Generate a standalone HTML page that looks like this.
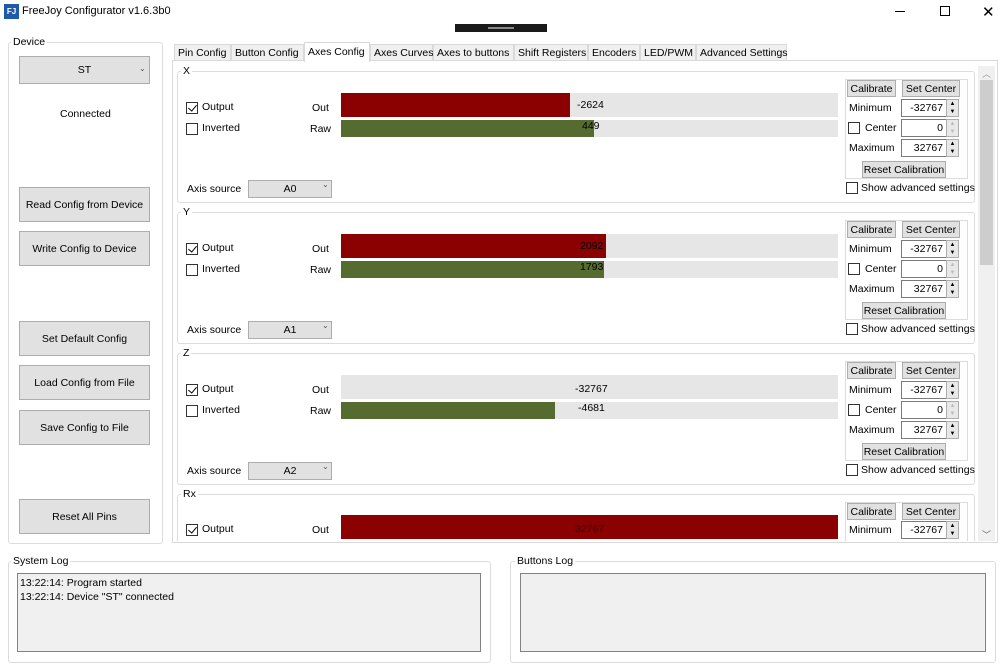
<!DOCTYPE html>
<html><head><meta charset="utf-8"><style>
*{box-sizing:border-box;margin:0;padding:0}
body{width:1000px;height:668px;background:#fff;font-family:"Liberation Sans",sans-serif;font-size:10.5px;color:#000;position:relative;overflow:hidden}
.a{position:absolute}
.btn{position:absolute;background:#e1e1e1;border:1px solid #adadad;text-align:center;display:flex;align-items:center;justify-content:center;white-space:nowrap}
.fs{position:absolute;border:1px solid #dcdcdc;border-radius:3px}
.lg{position:absolute;background:#fff;padding:0 2px;white-space:nowrap}
.cb{position:absolute;width:12px;height:12px;border:1px solid #333;background:#fff}
.cb.on::after{content:"";position:absolute;left:3px;top:0px;width:4px;height:7px;border:solid #000;border-width:0 1.5px 1.5px 0;transform:rotate(40deg)}
.tab{position:absolute;top:44px;height:17px;border:1px solid #d9d9d9;background:#f0f0f0;padding:2px 3px;white-space:nowrap}
.g{position:absolute;left:177px;width:798px;height:140px}
.g *{position:absolute;white-space:nowrap}
.inp{background:#fff;border:1px solid #7a7a7a;text-align:right;padding-right:3px;height:18px;line-height:16px}
.spin{width:13px;height:18px;border:1px solid #adadad;background:#e8e8e8;font-size:6px;line-height:8px;text-align:center}
</style></head><body>
<div class="a" style="left:4px;top:4px;width:15px;height:15px;background:#1e5aa8;color:#fff;font-size:8px;font-weight:bold;text-align:center;line-height:15px">FJ</div>
<div class="a" style="left:22px;top:5px;font-size:11px">FreeJoy Configurator v1.6.3b0</div>
<div class="a" style="left:895px;top:11px;width:10px;height:1px;background:#000"></div>
<div class="a" style="left:940px;top:6px;width:10px;height:10px;border:1px solid #000"></div>
<div class="a" style="left:982px;top:3px;font-size:15px">✕</div>
<div class="a" style="left:455px;top:24px;width:92px;height:8px;background:#1a1a1a"></div>
<div class="a" style="left:488px;top:27px;width:26px;height:2px;border-top:1px solid #888;border-bottom:1px solid #888"></div>

<div class="fs" style="left:8px;top:42px;width:155px;height:502px"></div>
<div class="lg" style="left:11px;top:36px">Device</div>
<div class="btn" style="left:19px;top:56px;width:131px;height:28px">ST</div>
<div class="a" style="left:139px;top:64px;font-size:8px;color:#555">⌄</div>
<div class="a" style="left:60px;top:108px">Connected</div>
<div class="btn" style="left:19px;top:187px;width:131px;height:35px">Read Config from Device</div>
<div class="btn" style="left:19px;top:231px;width:131px;height:35px">Write Config to Device</div>
<div class="btn" style="left:19px;top:321px;width:131px;height:35px">Set Default Config</div>
<div class="btn" style="left:19px;top:365px;width:131px;height:35px">Load Config from File</div>
<div class="btn" style="left:19px;top:410px;width:131px;height:35px">Save Config to File</div>
<div class="btn" style="left:19px;top:499px;width:131px;height:35px">Reset All Pins</div>

<div class="a" style="left:172px;top:60px;width:826px;height:483px;background:#fff;border:1px solid #d9d9d9"></div>
<div class="tab" style="left:174px;width:57px">Pin Config</div>
<div class="tab" style="left:231px;width:73px">Button Config</div>
<div class="tab" style="left:304px;top:42px;height:20px;width:66px;background:#fff;border-bottom:none;padding-top:3px">Axes Config</div>
<div class="tab" style="left:370px;width:63px">Axes Curves</div>
<div class="tab" style="left:433px;width:81px">Axes to buttons</div>
<div class="tab" style="left:514px;width:74px">Shift Registers</div>
<div class="tab" style="left:588px;width:52px">Encoders</div>
<div class="tab" style="left:640px;width:56px">LED/PWM</div>
<div class="tab" style="left:696px;width:91px">Advanced Settings</div>
<div class="a" style="left:978px;top:66px;width:17px;height:475px;background:#f0f0f0"></div>
<div class="a" style="left:980px;top:80px;width:13px;height:185px;background:#cdcdcd"></div>
<div class="a" style="left:982px;top:67px;font-size:9px;color:#999">︿</div>
<div class="a" style="left:982px;top:528px;font-size:9px;color:#666">﹀</div>

<div style="position:absolute;left:173px;top:62px;width:805px;height:479px;overflow:hidden">
<div style="position:absolute;left:-173px;top:-62px;width:1000px;height:700px">

<div class="g" style="top:66px">
<div class="fs" style="left:0;top:5px;width:798px;height:132px"></div>
<div style="left:4px;top:-1px;background:#fff;padding:0 2px">X</div>
<div class="cb on" style="left:9px;top:36px"></div><div style="left:25px;top:35px">Output</div>
<div class="cb" style="left:9px;top:57px"></div><div style="left:25px;top:56px">Inverted</div>
<div style="left:135px;top:36px">Out</div><div style="left:133px;top:57px">Raw</div>
<div style="left:164px;top:27px;width:497px;height:24px;background:#e6e6e6"></div>
<div style="left:164px;top:27px;width:229px;height:24px;background:#8b0000"></div>
<div style="left:400px;top:33px">-2624</div>
<div style="left:164px;top:54px;width:497px;height:17px;background:#e6e6e6"></div>
<div style="left:164px;top:54px;width:253px;height:17px;background:#556b2f"></div>
<div style="left:405px;top:54px">449</div>
<div style="left:10px;top:117px">Axis source</div>
<div class="btn" style="left:71px;top:114px;width:84px;height:18px">A0</div><div style="left:145px;top:114px;font-size:8px;color:#555">⌄</div>
<div style="left:668px;top:13px;width:123px;height:100px;border:1px solid #dcdcdc"></div>
<div class="btn" style="left:670px;top:14px;width:49px;height:17px">Calibrate</div>
<div class="btn" style="left:725px;top:14px;width:58px;height:17px">Set Center</div>
<div style="left:672px;top:36px">Minimum</div>
<div class="inp" style="left:724px;top:33px;width:46px">-32767</div><div class="spin" style="left:769px;top:33px">▲<br>▼</div>
<div class="cb" style="left:671px;top:56px"></div><div style="left:688px;top:56px">Center</div>
<div class="inp" style="left:724px;top:53px;width:46px">0</div><div class="spin" style="left:769px;top:53px;color:#bbb">▲<br>▼</div>
<div style="left:672px;top:76px">Maximum</div>
<div class="inp" style="left:724px;top:73px;width:46px">32767</div><div class="spin" style="left:769px;top:73px">▲<br>▼</div>
<div class="btn" style="left:685px;top:95px;width:84px;height:17px">Reset Calibration</div>
<div class="cb" style="left:669px;top:116px"></div><div style="left:684px;top:116px">Show advanced settings</div>
</div>

<div class="g" style="top:207px">
<div class="fs" style="left:0;top:5px;width:798px;height:132px"></div>
<div style="left:4px;top:-1px;background:#fff;padding:0 2px">Y</div>
<div class="cb on" style="left:9px;top:36px"></div><div style="left:25px;top:35px">Output</div>
<div class="cb" style="left:9px;top:57px"></div><div style="left:25px;top:56px">Inverted</div>
<div style="left:135px;top:36px">Out</div><div style="left:133px;top:57px">Raw</div>
<div style="left:164px;top:27px;width:497px;height:24px;background:#e6e6e6"></div>
<div style="left:164px;top:27px;width:265px;height:24px;background:#8b0000"></div>
<div style="left:403px;top:33px">2092</div>
<div style="left:164px;top:54px;width:497px;height:17px;background:#e6e6e6"></div>
<div style="left:164px;top:54px;width:263px;height:17px;background:#556b2f"></div>
<div style="left:403px;top:54px">1793</div>
<div style="left:10px;top:117px">Axis source</div>
<div class="btn" style="left:71px;top:114px;width:84px;height:18px">A1</div><div style="left:145px;top:114px;font-size:8px;color:#555">⌄</div>
<div style="left:668px;top:13px;width:123px;height:100px;border:1px solid #dcdcdc"></div>
<div class="btn" style="left:670px;top:14px;width:49px;height:17px">Calibrate</div>
<div class="btn" style="left:725px;top:14px;width:58px;height:17px">Set Center</div>
<div style="left:672px;top:36px">Minimum</div>
<div class="inp" style="left:724px;top:33px;width:46px">-32767</div><div class="spin" style="left:769px;top:33px">▲<br>▼</div>
<div class="cb" style="left:671px;top:56px"></div><div style="left:688px;top:56px">Center</div>
<div class="inp" style="left:724px;top:53px;width:46px">0</div><div class="spin" style="left:769px;top:53px;color:#bbb">▲<br>▼</div>
<div style="left:672px;top:76px">Maximum</div>
<div class="inp" style="left:724px;top:73px;width:46px">32767</div><div class="spin" style="left:769px;top:73px">▲<br>▼</div>
<div class="btn" style="left:685px;top:95px;width:84px;height:17px">Reset Calibration</div>
<div class="cb" style="left:669px;top:116px"></div><div style="left:684px;top:116px">Show advanced settings</div>
</div>

<div class="g" style="top:348px">
<div class="fs" style="left:0;top:5px;width:798px;height:132px"></div>
<div style="left:4px;top:-1px;background:#fff;padding:0 2px">Z</div>
<div class="cb on" style="left:9px;top:36px"></div><div style="left:25px;top:35px">Output</div>
<div class="cb" style="left:9px;top:57px"></div><div style="left:25px;top:56px">Inverted</div>
<div style="left:135px;top:36px">Out</div><div style="left:133px;top:57px">Raw</div>
<div style="left:164px;top:27px;width:497px;height:24px;background:#e6e6e6"></div>
<div style="left:398px;top:35px">-32767</div>
<div style="left:164px;top:54px;width:497px;height:17px;background:#e6e6e6"></div>
<div style="left:164px;top:54px;width:214px;height:17px;background:#556b2f"></div>
<div style="left:401px;top:54px">-4681</div>
<div style="left:10px;top:117px">Axis source</div>
<div class="btn" style="left:71px;top:114px;width:84px;height:18px">A2</div><div style="left:145px;top:114px;font-size:8px;color:#555">⌄</div>
<div style="left:668px;top:13px;width:123px;height:100px;border:1px solid #dcdcdc"></div>
<div class="btn" style="left:670px;top:14px;width:49px;height:17px">Calibrate</div>
<div class="btn" style="left:725px;top:14px;width:58px;height:17px">Set Center</div>
<div style="left:672px;top:36px">Minimum</div>
<div class="inp" style="left:724px;top:33px;width:46px">-32767</div><div class="spin" style="left:769px;top:33px">▲<br>▼</div>
<div class="cb" style="left:671px;top:56px"></div><div style="left:688px;top:56px">Center</div>
<div class="inp" style="left:724px;top:53px;width:46px">0</div><div class="spin" style="left:769px;top:53px;color:#bbb">▲<br>▼</div>
<div style="left:672px;top:76px">Maximum</div>
<div class="inp" style="left:724px;top:73px;width:46px">32767</div><div class="spin" style="left:769px;top:73px">▲<br>▼</div>
<div class="btn" style="left:685px;top:95px;width:84px;height:17px">Reset Calibration</div>
<div class="cb" style="left:669px;top:116px"></div><div style="left:684px;top:116px">Show advanced settings</div>
</div>

<div class="g" style="top:489px">
<div class="fs" style="left:0;top:5px;width:798px;height:132px"></div>
<div style="left:4px;top:-1px;background:#fff;padding:0 2px">Rx</div>
<div class="cb on" style="left:9px;top:35px"></div><div style="left:25px;top:34px">Output</div>
<div style="left:135px;top:35px">Out</div>
<div style="left:164px;top:26px;width:497px;height:24px;background:#8b0000"></div>
<div style="left:398px;top:34px;color:#300">32767</div>
<div style="left:668px;top:13px;width:123px;height:100px;border:1px solid #dcdcdc"></div>
<div class="btn" style="left:670px;top:14px;width:49px;height:17px">Calibrate</div>
<div class="btn" style="left:725px;top:14px;width:58px;height:17px">Set Center</div>
<div style="left:672px;top:35px">Minimum</div>
<div class="inp" style="left:724px;top:32px;width:46px">-32767</div><div class="spin" style="left:769px;top:32px">▲<br>▼</div>
</div>
</div></div>

<div class="fs" style="left:8px;top:561px;width:483px;height:102px"></div>
<div class="lg" style="left:11px;top:555px">System Log</div>
<div class="a" style="left:17px;top:573px;width:464px;height:79px;background:#f0f0f0;border:1px solid #828282;padding:2px 2px;line-height:14px">13:22:14: Program started<br>13:22:14: Device "ST" connected</div>
<div class="fs" style="left:510px;top:561px;width:486px;height:102px"></div>
<div class="lg" style="left:515px;top:555px">Buttons Log</div>
<div class="a" style="left:520px;top:573px;width:466px;height:79px;background:#f0f0f0;border:1px solid #828282"></div>
</body></html>
